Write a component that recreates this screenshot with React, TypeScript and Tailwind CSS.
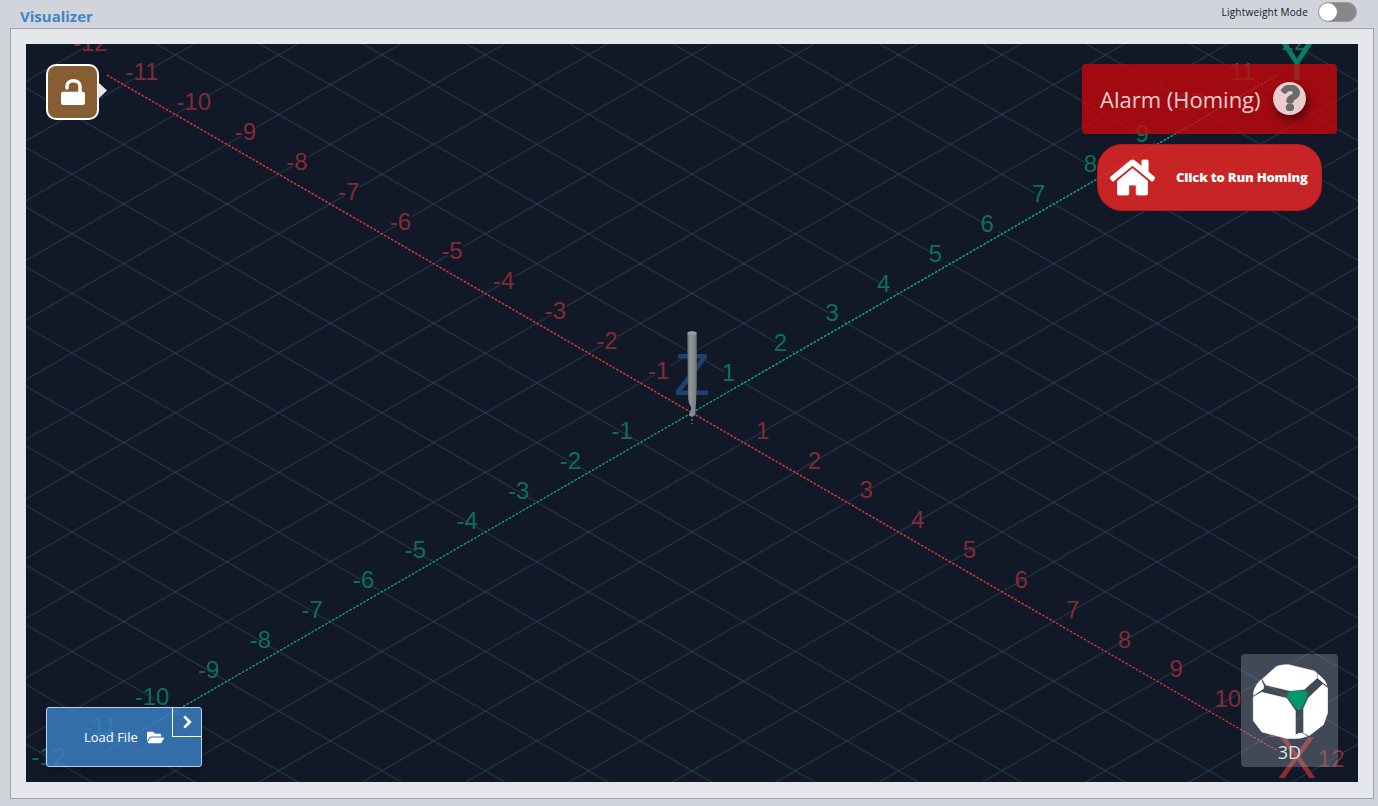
import React from 'react';
import { FaFolderOpen, FaHome, FaChevronRight, FaQuestion } from 'react-icons/fa';

const CX = 692;
const CY = 412.8;
const SX = 51.67;
const SY = 29.83;

type Label = { x: number; y: number; text: string; color: string; masked: boolean };

const labels: Label[] = [];
for (let k = -12; k <= 12; k++) {
  if (k === 0) continue;
  labels.push({ x: (k > 0 ? 711.1 : 710.4) + SX * k, y: (k < 0 ? 400 : 400.4) + SY * k, text: String(k), color: '#812c35', masked: k < 0 });
  const wide = Math.abs(k) >= 10;
  const gx = k > 0 ? 677.1 + SX * k - (wide ? 3 : 0) : 673.8 + SX * k - (wide ? 5 : 0);
  const gy = (k > 0 ? 402.3 : 400.7) - SY * k - (wide ? 2.5 : 0);
  labels.push({ x: gx, y: gy, text: String(k), color: '#0f6e57', masked: k > 0 });
}

const gridLines = Array.from({ length: 61 }, (_, i) => i - 30).filter((n) => n !== 0);

function Scene() {
  return (
    <svg className="absolute inset-0 block h-full w-full" viewBox="26 44 1332 738">
      <rect x="26" y="44" width="1332" height="738" fill="#111827" />
      <g stroke="#4b6a85" strokeOpacity="0.27" strokeWidth="1.6">
        {gridLines.map((n) => {
          const x = CX + n * SX * 2;
          return (
            <React.Fragment key={n}>
              <line x1={x - 40 * SX} y1={CY - 40 * SY} x2={x + 40 * SX} y2={CY + 40 * SY} />
              <line x1={x - 40 * SX} y1={CY + 40 * SY} x2={x + 40 * SX} y2={CY - 40 * SY} />
            </React.Fragment>
          );
        })}
      </g>
      {labels.filter((l) => l.masked).map((l) => (
        <rect key={l.color + l.text} x={l.x - 4} y={l.y - 12} width="15" height="24" fill="#111827" />
      ))}
      <g strokeWidth="1.35" strokeDasharray="2.5 1.5">
        <line x1={CX - 585} y1={CY - 337.7} x2={CX + 585} y2={CY + 337.7} stroke="#e23a3c" />
        <line x1={CX - 585} y1={CY + 337.7} x2={CX + 585} y2={CY - 337.7} stroke="#0cb586" />
      </g>
      <g fontFamily="Liberation Sans, Arial, sans-serif" fontSize="24" textAnchor="middle">
        {labels.map((l) => (
          <text key={l.color + l.text} x={l.x} y={l.y + 8.6} fill={l.color}>{l.text}</text>
        ))}
      </g>
      <g fontFamily="Liberation Sans, Arial, sans-serif" fontSize="59" textAnchor="middle">
        <text x="692" y="395" fill="#1f416c">Z</text>
        <text x="1297" y="778" fill="#912b32">X</text>
        <text x="1297" y="80" fill="#0a7d60">Y</text>
      </g>
      <defs>
        <linearGradient id="bit" x1="0" x2="1" y1="0" y2="0">
          <stop offset="0" stopColor="#6d7073" />
          <stop offset="0.35" stopColor="#93979a" />
          <stop offset="1" stopColor="#74777a" />
        </linearGradient>
      </defs>
      <path d="M687.3 333Q692 329.500 696.700 333V386L696 403Q695.500 407 695.500 415Q692 417.500 689 415.500L691.500 408Q688 403 688 398Z" fill="url(#bit)" />
      <ellipse cx="692" cy="333" rx="4.500" ry="1.800" fill="#969b9e" />
      <path d="M688 386.500H696.500" stroke="#7c8083" strokeWidth="0.7" />
      <path d="M692 403v21" stroke="#4c8bd0" strokeWidth="1.800" strokeDasharray="2 2" strokeOpacity="0.75" />
    </svg>
  );
}

function Cube() {
  return (
    <svg className="block h-[76px] w-[76px]" viewBox="216 192 228 228" strokeLinejoin="round">
      <g fill="#fff" stroke="#fff" strokeWidth="2">
        <path d="M290 199L308 195L325 194L403 213L412 221L410 235L373 268L330 272L258 255L247 237Z" />
        <path d="M220 291L245 277L320 295L346 332V406L325 416L246 396L220 362Z" />
        <path d="M428 253L443 264V338L430 374L387 407L371 398V325L386 293Z" />
        <path d="M243 239L251 258L250 266L221 286Q219 263 243 239Z" />
        <path d="M415 223Q436 240 441 256L430 248L413 234Z" />
        <path d="M328 415L357 400H368L381 409Q360 418 328 415Z" />
      </g>
      <path d="M324 280L331 276L376 274L382 280L379 293L362 326Q357 330 352 326L325 293Z" fill="#059669" stroke="#059669" strokeWidth="4" />
    </svg>
  );
}

function OpenLock() {
  return (
    <svg className="block h-[26px] w-6" viewBox="60 57 72 78" fill="none">
      <rect x="60" y="95" width="72" height="40" rx="7" fill="#fff" />
      <path d="M78 84V79C78 57 117 57 117 79V97" stroke="#fff" strokeWidth="10.500" strokeLinecap="round" />
    </svg>
  );
}

export default function App() {
  return (
    <div className="flex h-[806px] w-[1378px] flex-col overflow-hidden bg-[#d1d5db] pr-[4px] pl-[10px] font-['Open_Sans',sans-serif]">
      <header className="flex h-[28px] shrink-0 items-start justify-between pr-[17px] pl-[10px]">
        <h1 className="pt-[5px] text-[15px] leading-[22px] font-bold text-[#3f85c7]">Visualizer</h1>
        <div className="flex items-center gap-[10px] pt-[2px]">
          <span className="text-[10px] leading-[20px] tracking-[0.2px] text-gray-900">Lightweight Mode</span>
          <div className="flex h-5 w-[39px] items-center rounded-full border border-[#999] bg-[#888]">
            <div className="h-[18px] w-[18px] rounded-full bg-white" />
          </div>
        </div>
      </header>
      <main className="h-[771px] border border-[#9ca3af] bg-[#e5e7eb] p-[15px]">
        <div className="relative h-[738px] w-[1332px] overflow-hidden">
          <Scene />
          <button className="absolute top-5 left-5 flex h-14 w-[53px] items-center justify-center rounded-[10px] border-2 border-white bg-[#976834]/88">
            <OpenLock />
          </button>
          <svg className="absolute top-[38px] left-[72px] h-[17px] w-[9px]" viewBox="0 0 9 17">
            <path d="M0 0L9 8.500L0 17Z" fill="#e5e7eb" />
          </svg>
          <div className="absolute top-5 right-[21px] flex h-[70px] w-[255px] items-center rounded bg-[#cf070a]/76 pl-[18px]">
            <span className="w-[173px] text-[22px] text-[#f0cdd0]">Alarm (Homing)</span>
            <span className="mb-[2px] flex h-[33px] w-[33px] items-center justify-center rounded-full bg-[#ebcdd0] shadow-[2px_5px_10px_rgba(0,0,0,0.5)]">
              <FaQuestion className="h-[26px] w-[20px] text-[#6b6b6b]" stroke="currentColor" strokeWidth="26" />
            </span>
          </div>
          <button className="absolute top-[100px] right-9 flex h-[67px] w-[225px] items-center rounded-[25px] border border-[#b91c1c] bg-[#dc2626]/90 pl-3 text-white">
            <FaHome className="h-[45px] w-[45px]" stroke="currentColor" strokeWidth="10" />
            <span className="ml-[21px] text-[13px] font-extrabold tracking-[-0.18px] whitespace-nowrap">Click to Run Homing</span>
          </button>
          <button className="absolute bottom-[15px] left-5 flex h-[60px] w-[156px] items-center rounded-[3px] border border-[#c4d0de] bg-[#3c80c4]/84 pl-[37px] text-white shadow-lg">
            <span className="pt-px text-[13px]">Load File</span>
            <FaFolderOpen className="ml-[9px] h-[17px] w-[17px]" />
            <span className="absolute top-0 right-0 flex h-[29px] w-[29px] items-center justify-center border-b border-l border-white">
              <FaChevronRight className="mb-px h-[14px] w-[11px]" stroke="currentColor" strokeWidth="24" />
            </span>
          </button>
          <div className="absolute right-5 bottom-[15px] flex h-[113px] w-[97px] flex-col items-center rounded bg-[#9ca3af]/35 pt-[10px]">
            <Cube />
            <span className="text-[18px] leading-[25px] text-[#e1e3e6]">3D</span>
          </div>
        </div>
      </main>
    </div>
  );
}
